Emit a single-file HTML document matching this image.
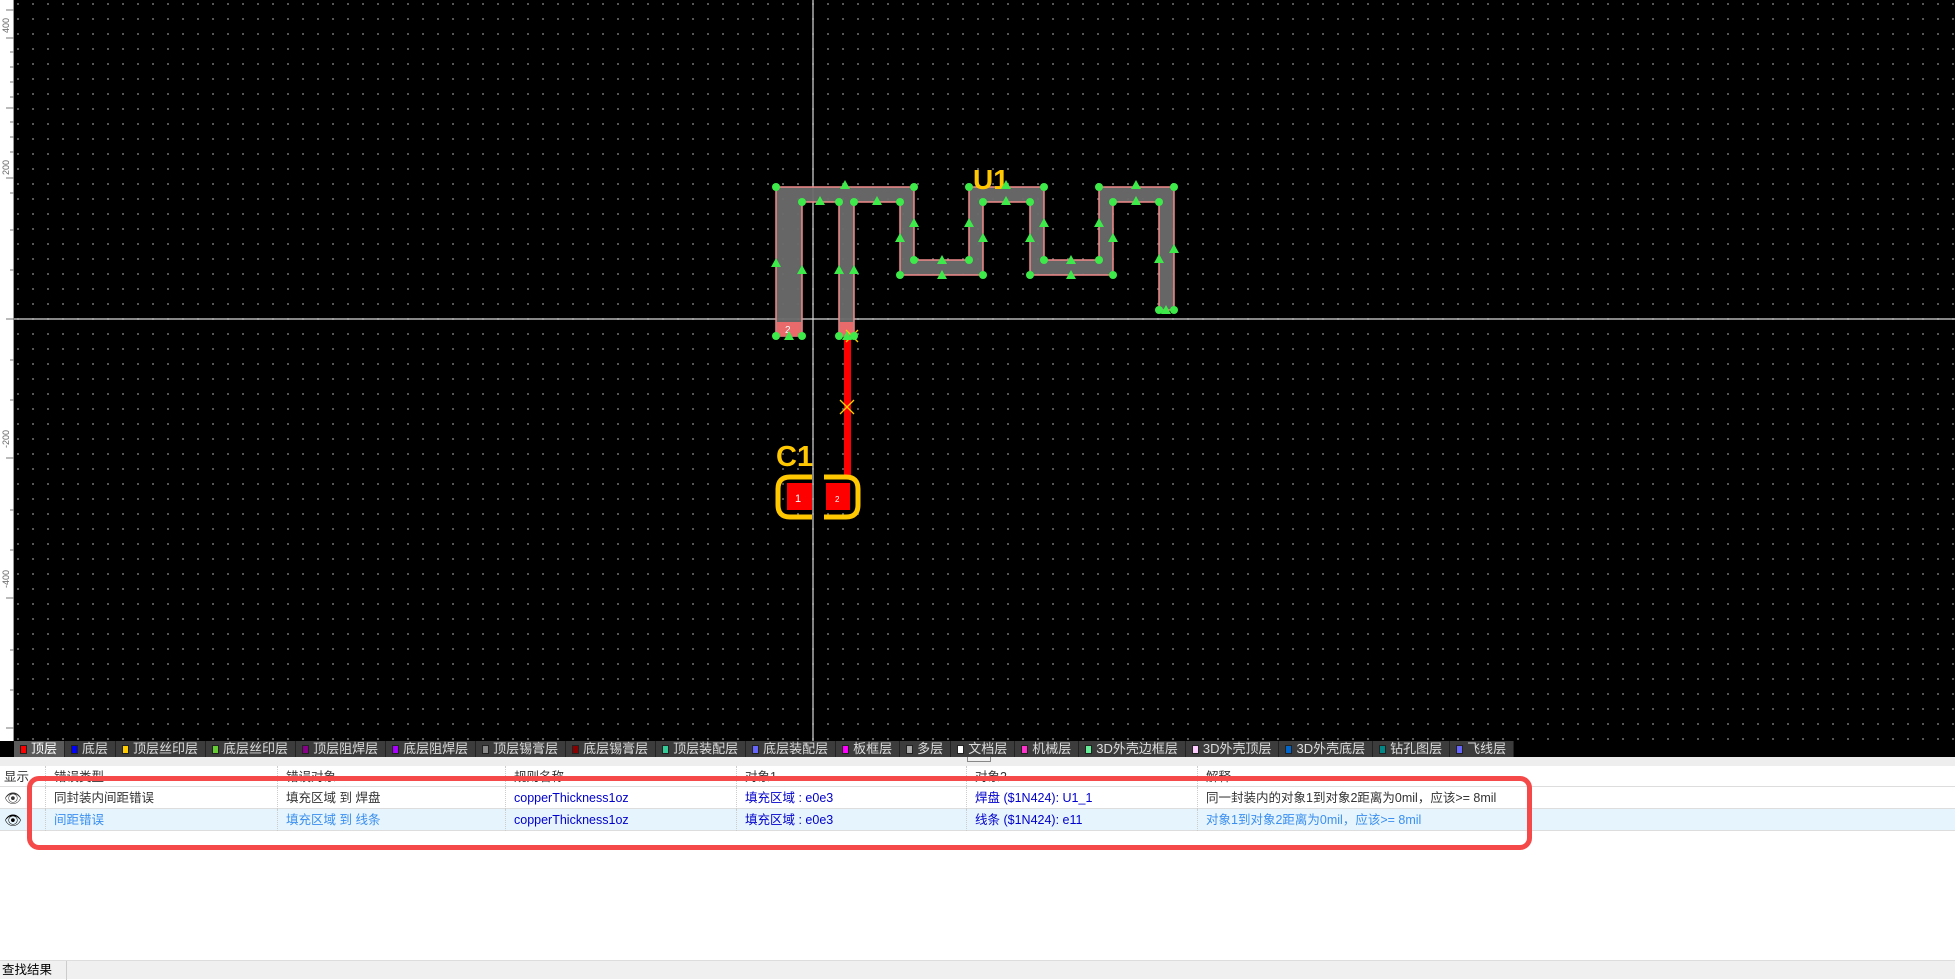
<!DOCTYPE html>
<html><head><meta charset="utf-8"><style>
*{margin:0;padding:0;box-sizing:border-box}
body{width:1955px;height:979px;overflow:hidden;background:#fff;font-family:"Liberation Sans","Noto Sans CJK SC",sans-serif;position:relative}
#canvas{position:absolute;left:14px;top:0;width:1941px;height:741px;background-color:#000;background-image:radial-gradient(circle,#6e6e6e 0.8px,transparent 1.1px);background-size:15px 15px;background-position:-3.5px -3.5px}
#ruler{position:absolute;left:0;top:0;width:14px;height:741px;background:#fff;border-right:1px solid #999}
#bar{position:absolute;left:0;top:741px;width:1955px;height:16px;background:#000}
#bar .it{float:left;height:16px;background:#3c3c3c;color:#ddd;font-size:13px;line-height:16px;padding:0 7px 0 6px;border-right:1px solid #222;white-space:nowrap}
#bar .it i{display:inline-block;width:7px;height:9px;margin-right:4px;vertical-align:-1px;border:1px solid #222}
#split{position:absolute;left:0;top:757px;width:1955px;height:10px;background:#eee;border-bottom:1px dotted #bbb}
.row{position:absolute;left:0;width:1955px;height:22px;font-size:12.5px;line-height:22px;border-bottom:1px solid #ddd}
.c{position:absolute;top:0;height:22px;border-left:1px dotted #ccc;padding-left:8px;white-space:nowrap}
#status{position:absolute;left:0;top:960px;width:1955px;height:19px;background:#f0f0f0;border-top:1px solid #ddd;font-size:12.5px;line-height:19px}
</style></head><body>
<div id="canvas"></div>
<div id="ruler">
<div style="position:absolute;left:1px;top:18px;font-size:9px;color:#666;writing-mode:vertical-rl;transform:rotate(180deg)">400</div>
<div style="position:absolute;left:1px;top:160px;font-size:9px;color:#666;writing-mode:vertical-rl;transform:rotate(180deg)">200</div>
<div style="position:absolute;left:1px;top:430px;font-size:9px;color:#666;writing-mode:vertical-rl;transform:rotate(180deg)">-200</div>
<div style="position:absolute;left:1px;top:570px;font-size:9px;color:#666;writing-mode:vertical-rl;transform:rotate(180deg)">-400</div>
</div>
<svg width="1955" height="741" style="position:absolute;left:0;top:0">
<g>
<line x1="6" y1="10" x2="14" y2="10" stroke="#777"/><line x1="6" y1="38" x2="14" y2="38" stroke="#777"/><line x1="10" y1="52" x2="14" y2="52" stroke="#777"/><line x1="10" y1="67" x2="14" y2="67" stroke="#777"/><line x1="10" y1="82" x2="14" y2="82" stroke="#777"/><line x1="10" y1="97" x2="14" y2="97" stroke="#777"/><line x1="6" y1="108" x2="14" y2="108" stroke="#777"/><line x1="10" y1="122" x2="14" y2="122" stroke="#777"/><line x1="10" y1="137" x2="14" y2="137" stroke="#777"/><line x1="10" y1="152" x2="14" y2="152" stroke="#777"/><line x1="6" y1="178" x2="14" y2="178" stroke="#777"/><line x1="10" y1="193" x2="14" y2="193" stroke="#777"/><line x1="10" y1="230" x2="14" y2="230" stroke="#777"/><line x1="10" y1="270" x2="14" y2="270" stroke="#777"/><line x1="6" y1="319" x2="14" y2="319" stroke="#777"/><line x1="10" y1="360" x2="14" y2="360" stroke="#777"/><line x1="10" y1="400" x2="14" y2="400" stroke="#777"/><line x1="6" y1="458" x2="14" y2="458" stroke="#777"/><line x1="10" y1="510" x2="14" y2="510" stroke="#777"/><line x1="10" y1="550" x2="14" y2="550" stroke="#777"/><line x1="6" y1="598" x2="14" y2="598" stroke="#777"/><line x1="10" y1="650" x2="14" y2="650" stroke="#777"/><line x1="10" y1="690" x2="14" y2="690" stroke="#777"/><line x1="6" y1="728" x2="14" y2="728" stroke="#777"/>
</g>
<line x1="813" y1="0" x2="813" y2="741" stroke="#d8d8d8" stroke-width="1.2"/>
<line x1="14" y1="319" x2="1955" y2="319" stroke="#d8d8d8" stroke-width="1.2"/>
<polygon points="776,336 776,187 914,187 914,260 969,260 969,187 1044,187 1044,260 1099,260 1099,187 1174,187 1174,310 1159,310 1159,202 1113,202 1113,275 1030,275 1030,202 983,202 983,275 900,275 900,202 854,202 854,336 839,336 839,202 802,202 802,336" fill="#6b6b6b" fill-opacity="0.95" stroke="#f08a8a" stroke-width="1.5"/>
<rect x="777" y="322" width="24" height="14" fill="#e86a6a"/>
<rect x="840" y="322" width="13" height="14" fill="#e86a6a"/>
<text x="785" y="333" font-size="10" fill="#fff">2</text>
<rect x="844" y="336" width="7" height="142" fill="#ff0000"/>
<g stroke="#ffd000" stroke-width="1.3"><line x1="840" y1="400" x2="854" y2="414"/><line x1="854" y1="400" x2="840" y2="414"/><line x1="846" y1="330" x2="858" y2="342"/><line x1="858" y1="330" x2="846" y2="342"/></g>
<path d="M812,477 H790 Q778,477 778,489 V505 Q778,517 790,517 H812" fill="none" stroke="#ffc800" stroke-width="5"/>
<path d="M824,477 H846 Q858,477 858,489 V505 Q858,517 846,517 H824" fill="none" stroke="#ffc800" stroke-width="5"/>
<rect x="787" y="483" width="25" height="27" fill="#ff0000"/>
<rect x="826" y="483" width="24" height="27" fill="#ff0000"/>
<text x="795" y="502" font-size="11" fill="#fff">1</text>
<text x="835" y="502" font-size="8" fill="#fff">2</text>
<text x="776" y="466" font-size="29" font-weight="bold" fill="#ffc800" font-family="Liberation Sans">C1</text>
<text x="973" y="189" font-size="28" font-weight="bold" fill="#ffc800" font-family="Liberation Sans">U1</text>
<g fill="#3dea4a">
<circle cx="776" cy="187" r="4"/><circle cx="914" cy="187" r="4"/><circle cx="969" cy="187" r="4"/><circle cx="1044" cy="187" r="4"/><circle cx="1099" cy="187" r="4"/><circle cx="1174" cy="187" r="4"/>
<circle cx="802" cy="202" r="4"/><circle cx="839" cy="202" r="4"/><circle cx="854" cy="202" r="4"/><circle cx="900" cy="202" r="4"/><circle cx="983" cy="202" r="4"/><circle cx="1030" cy="202" r="4"/><circle cx="1113" cy="202" r="4"/><circle cx="1159" cy="202" r="4"/>
<circle cx="914" cy="260" r="4"/><circle cx="969" cy="260" r="4"/><circle cx="1044" cy="260" r="4"/><circle cx="1099" cy="260" r="4"/>
<circle cx="900" cy="275" r="4"/><circle cx="983" cy="275" r="4"/><circle cx="1030" cy="275" r="4"/><circle cx="1113" cy="275" r="4"/>
<circle cx="1159" cy="310" r="4"/><circle cx="1174" cy="310" r="4"/>
<circle cx="776" cy="336" r="4"/><circle cx="802" cy="336" r="4"/><circle cx="839" cy="336" r="4"/><circle cx="854" cy="336" r="4"/>
<path d="M845,180 l5,9 h-10z M820,196 l5,9 h-10z M877,196 l5,9 h-10z M1006,180 l5,9 h-10z M1006,196 l5,9 h-10z M1136,180 l5,9 h-10z M1136,196 l5,9 h-10z M914,218 l5,9 h-10z M900,233 l5,9 h-10z M969,218 l5,9 h-10z M983,233 l5,9 h-10z M1044,218 l5,9 h-10z M1030,233 l5,9 h-10z M1099,218 l5,9 h-10z M1113,233 l5,9 h-10z M942,255 l5,9 h-10z M942,270 l5,9 h-10z M1071,255 l5,9 h-10z M1071,270 l5,9 h-10z M776,258 l5,9 h-10z M802,265 l5,9 h-10z M839,265 l5,9 h-10z M854,265 l5,9 h-10z M1174,244 l5,9 h-10z M1159,254 l5,9 h-10z M789,331 l5,9 h-10z M847,331 l5,9 h-10z M1166,305 l5,9 h-10z"/>
</g>
</svg>
<div id="bar">
<div class="it" style="background:#5a5a5a;color:#fff;margin-left:14px"><i style="background:#f00"></i>顶层</div>
<div class="it"><i style="background:#00f"></i>底层</div>
<div class="it"><i style="background:#fc0"></i>顶层丝印层</div>
<div class="it"><i style="background:#6c3"></i>底层丝印层</div>
<div class="it"><i style="background:#808"></i>顶层阻焊层</div>
<div class="it"><i style="background:#a0f"></i>底层阻焊层</div>
<div class="it"><i style="background:#888"></i>顶层锡膏层</div>
<div class="it"><i style="background:#800"></i>底层锡膏层</div>
<div class="it"><i style="background:#3c9"></i>顶层装配层</div>
<div class="it"><i style="background:#66f"></i>底层装配层</div>
<div class="it"><i style="background:#f0f"></i>板框层</div>
<div class="it"><i style="background:#aaa"></i>多层</div>
<div class="it"><i style="background:#fff"></i>文档层</div>
<div class="it"><i style="background:#f3c"></i>机械层</div>
<div class="it"><i style="background:#6e9"></i>3D外壳边框层</div>
<div class="it"><i style="background:#fcf"></i>3D外壳顶层</div>
<div class="it"><i style="background:#06c"></i>3D外壳底层</div>
<div class="it"><i style="background:#088"></i>钻孔图层</div>
<div class="it"><i style="background:#66f"></i>飞线层</div>
</div>
<div id="split"><div style="position:absolute;left:967px;top:0;width:24px;height:5px;border:1px solid #888;border-top:none"></div></div>
<div class="row" style="top:766px;height:21px;background:#fff;color:#333">
<div class="c" style="left:0;border:none;padding-left:4px">显示</div>
<div class="c" style="left:45px">错误类型</div><div class="c" style="left:277px">错误对象</div><div class="c" style="left:505px">规则名称</div><div class="c" style="left:736px">对象1</div><div class="c" style="left:966px">对象2</div><div class="c" style="left:1197px">解释</div>
</div>
<div class="row" style="top:787px;background:#fff;color:#333">
<div class="c" style="left:4px;border:none;padding:0;font-size:14px">👁</div>
<div class="c" style="left:45px">同封装内间距错误</div><div class="c" style="left:277px">填充区域 到 焊盘</div><div class="c" style="left:505px;color:#00c">copperThickness1oz</div><div class="c" style="left:736px;color:#00c">填充区域 : e0e3</div><div class="c" style="left:966px;color:#00c">焊盘 ($1N424): U1_1</div><div class="c" style="left:1197px">同一封装内的对象1到对象2距离为0mil，应该&gt;= 8mil</div>
</div>
<div class="row" style="top:809px;background:#e6f5fd;color:#3a8ef0">
<div class="c" style="left:4px;border:none;padding:0;font-size:14px;color:#000">👁</div>
<div class="c" style="left:45px">间距错误</div><div class="c" style="left:277px">填充区域 到 线条</div><div class="c" style="left:505px;color:#00c">copperThickness1oz</div><div class="c" style="left:736px;color:#00c">填充区域 : e0e3</div><div class="c" style="left:966px;color:#00c">线条 ($1N424): e11</div><div class="c" style="left:1197px">对象1到对象2距离为0mil，应该&gt;= 8mil</div>
</div>
<div style="position:absolute;left:27px;top:776px;width:1505px;height:74px;border:5px solid #f54848;border-radius:12px"></div>
<div id="status"><span style="display:inline-block;padding:0 14px 0 2px;border-right:1px solid #ccc;height:19px">查找结果</span></div>
</body></html>
